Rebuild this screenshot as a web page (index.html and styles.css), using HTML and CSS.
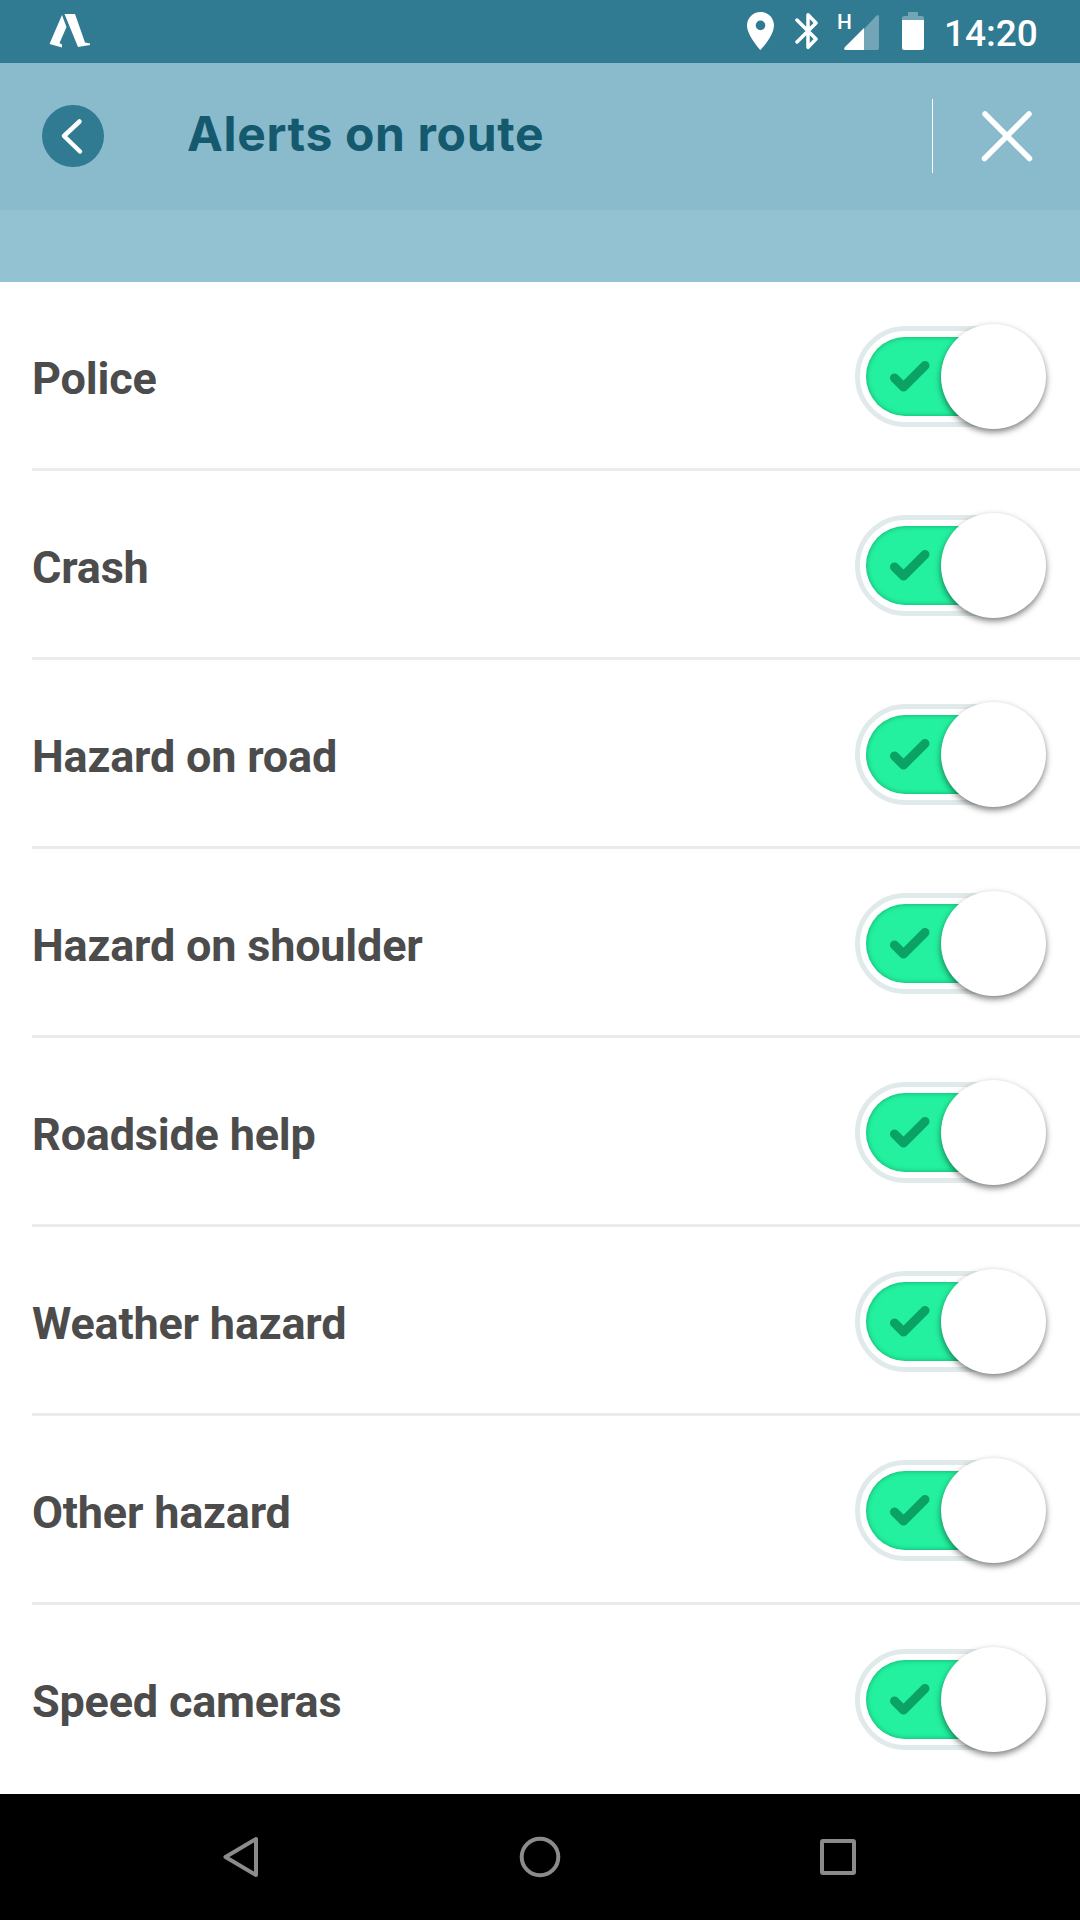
FILE: index.html
```html
<!DOCTYPE html>
<html lang="en">
<head>
  <meta charset="UTF-8" />
  <meta name="viewport" content="width=device-width, initial-scale=1" />
  <title>Alerts on route</title>
  <link rel="stylesheet" href="styles.css">
</head>
<body>

  <div class="status-bar">
    <svg class="app-logo" width="42" height="36" viewBox="0 0 42 36">
      <path d="M13 2 L17.5 14 L10.5 30 L13 31.5 V34.5 L.5 31 Z" fill="#fff" />
      <path d="M15.5 1 H26 L36 29.5 L41 30.5 V32 L29 34 Z" fill="#fff" />
    </svg>
    <div class="status-icons">
      <svg class="pin" width="27" height="38" viewBox="0 0 27 38">
        <path fill="#fff" fill-rule="evenodd" d="M13.5 0C6 0 0 6 0 13.4 0 23.5 13.5 38 13.5 38S27 23.5 27 13.4C27 6 21 0 13.5 0zm0 18.2a4.8 4.8 0 1 1 0-9.6 4.8 4.8 0 0 1 0 9.6z" />
      </svg>
      <svg class="bluetooth" width="24" height="38" viewBox="0 0 24 38">
        <path fill="none" stroke="#fff" stroke-width="3.5" stroke-linecap="round" stroke-linejoin="round" d="M2 8 L21 27 L13 35.3 V2.7 L21 11 L2 30" />
      </svg>
      <div class="signal">
        <span>H</span>
        <svg width="36" height="36" viewBox="0 0 36 36">
          <path fill="#72a5b6" d="M20 15 L32.5 1.5 Q35 0 35 2.5 V34 Q35 36 33 36 H20 Z" />
          <path fill="#fff" d="M20 14 V36 H2 Q-1 36 1 33 Z" />
        </svg>
      </div>
      <svg class="battery" width="22" height="38" viewBox="0 0 22 38">
        <path fill="#72a5b6" d="M6 4 V0 H16 V4 H20 Q22 4 22 6 V9 H0 V6 Q0 4 2 4 Z" />
        <path fill="#fff" d="M0 8 H22 V36 Q22 38 20 38 H2 Q0 38 0 36 Z" />
      </svg>
      <span class="clock">14:20</span>
    </div>
  </div>

  <header class="header">
    <button class="back-btn" aria-label="Back">
      <svg width="62" height="62" viewBox="0 0 62 62">
        <path d="M37.5 16.5 L22 31 L38 46.5" fill="none" stroke="#fff" stroke-width="4.5" stroke-linecap="round" stroke-linejoin="round" />
      </svg>
    </button>
    <h1>Alerts on route</h1>
    <button class="close-btn" aria-label="Close">
      <svg width="52" height="52" viewBox="0 0 52 52">
        <path d="M4 4 L48.5 48.5 M48 4 L3.5 48.5" stroke="#fff" stroke-width="5.5" stroke-linecap="round" />
      </svg>
    </button>
  </header>
  <div class="strip"></div>

  <ul class="alerts" id="alerts"></ul>

  <nav class="nav-bar">
    <svg width="40" height="44" viewBox="0 0 40 44">
      <path d="M36 4 V40 L5.5 22 Z" />
    </svg>
    <svg width="44" height="44" viewBox="0 0 44 44">
      <circle cx="23" cy="22" r="18.3" />
    </svg>
    <svg width="40" height="44" viewBox="0 0 40 44">
      <rect x="4" y="6" width="32" height="32" rx="1" />
    </svg>
  </nav>

  <script>
    const alerts = [
      'Police',
      'Crash',
      'Hazard on road',
      'Hazard on shoulder',
      'Roadside help',
      'Weather hazard',
      'Other hazard',
      'Speed cameras'
    ];
    const list = document.getElementById('alerts');

    alerts.forEach(name => {
      const row = document.createElement('li');
      row.innerHTML = `
        <span class="label">${name}</span>
        <div class="toggle">
          <div class="outline"></div>
          <div class="track">
            <svg width="42" height="34" viewBox="0 0 42 34">
              <path d="M5.5 18 L14.5 27 L36 5.5" fill="none" stroke="#0aa265" stroke-width="9" stroke-linecap="round" stroke-linejoin="round" />
            </svg>
          </div>
          <div class="knob"></div>
        </div>`;
      list.appendChild(row);
    });
  </script>
</body>
</html>
```
FILE: styles.css
```css
* {
  box-sizing: border-box;
}

body {
  margin: 0;
  height: 1920px;
  display: flex;
  flex-direction: column;
  font-family: Roboto, sans-serif;
  background: #fff;
  overflow: hidden;
}

svg {
  display: block;
  flex-shrink: 0;
}

button {
  border: none;
  padding: 0;
  background: none;
  cursor: pointer;
}

/* Status bar */
.status-bar {
  height: 63px;
  display: flex;
  justify-content: space-between;
  align-items: flex-start;
  padding: 0 43px 0 49px;
  background: #307a92;
  color: #fff;
}

.app-logo {
  margin-top: 13px;
}

.status-icons {
  display: flex;
  align-items: flex-start;
  padding-top: 12px;
}

.bluetooth {
  margin-left: 21px;
}

.signal {
  display: flex;
  margin-left: 18px;
}

.signal span {
  width: 7px;
  font-size: 21px;
  line-height: 20px;
  font-weight: 500;
}

.signal svg {
  margin-top: 2px;
}

.battery {
  margin-left: 22px;
}

.clock {
  margin-left: 20px;
  width: 93px;
  font-size: 37px;
  line-height: 43px;
  font-weight: 500;
}

/* Header */
.header {
  height: 147px;
  display: flex;
  align-items: flex-start;
  padding: 36px 0 0 42px;
  background: #8abbcd;
}

.back-btn {
  width: 62px;
  height: 62px;
  margin-top: 6px;
  border-radius: 50%;
  background: #307a92;
}

.header h1 {
  flex: 1;
  margin: 5px 0 0 83px;
  font-family: Inter, sans-serif;
  font-size: 48px;
  line-height: 60px;
  font-weight: 700;
  letter-spacing: 0.65px;
  white-space: nowrap;
  color: #14596d;
}

.close-btn {
  width: 148px;
  height: 74px;
  padding-left: 48px;
  border-left: 1px solid #fff;
}

.strip {
  height: 72px;
  background: #93c3d3;
}

/* Alert list */
.alerts {
  flex: 1;
  margin: 0;
  padding: 0 0 0 32px;
  list-style: none;
}

.alerts li {
  height: 189px;
  display: flex;
  justify-content: space-between;
  align-items: center;
  padding-right: 34px;
  border-bottom: 3px solid #ebebeb;
}

.alerts li:last-child {
  border-bottom-color: transparent;
}

.label {
  padding-top: 8px;
  font-size: 45px;
  line-height: 54px;
  font-weight: 700;
  letter-spacing: -0.2px;
  color: #4c4c4c;
}

.toggle {
  position: relative;
  width: 191px;
  height: 101px;
  margin-top: 3px;
  padding-right: 11px;
}

.outline {
  height: 101px;
  border: 5px solid #e1eaeb;
  border-radius: 51px;
}

.track {
  position: absolute;
  top: 11px;
  left: 11px;
  width: 150px;
  height: 79px;
  padding: 23px 0 0 23px;
  border-radius: 40px;
  background: #23f19f;
  box-shadow: inset 0 0 5px rgba(0, 110, 60, 0.55);
}

.knob {
  position: absolute;
  top: -2px;
  right: 0;
  width: 105px;
  height: 105px;
  border-radius: 50%;
  background: #fff;
  box-shadow: 0 3px 6px rgba(0, 0, 0, 0.5);
}

/* Android navigation */
.nav-bar {
  height: 126px;
  display: flex;
  justify-content: space-between;
  padding: 41px 222px 0 220px;
  background: #000;
}

.nav-bar svg {
  fill: none;
  stroke: #8b8b8b;
  stroke-width: 4;
  stroke-linejoin: round;
}
```
